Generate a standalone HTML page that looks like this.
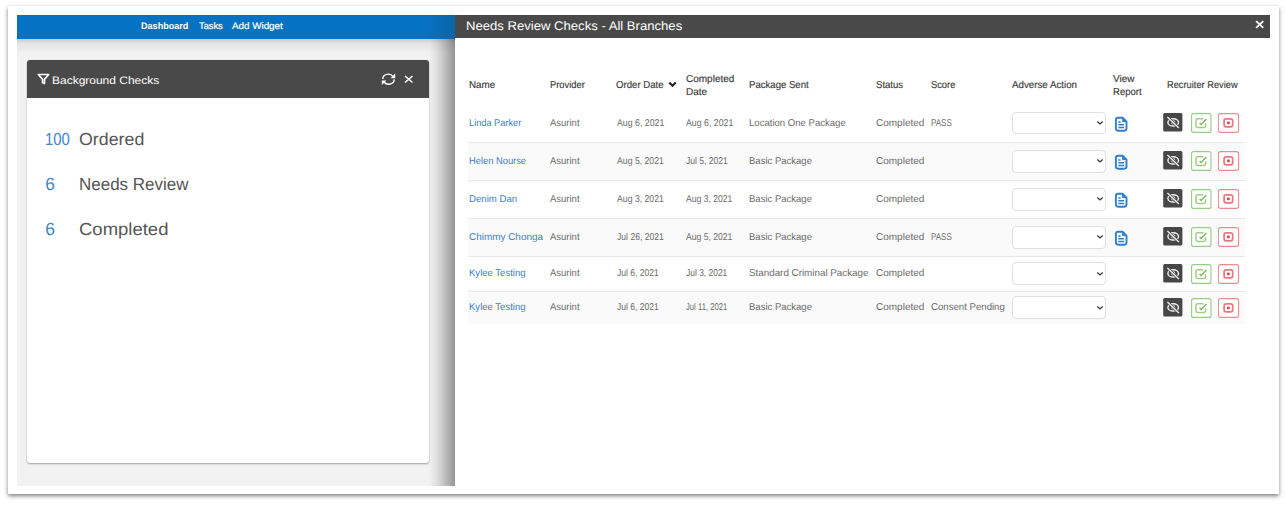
<!DOCTYPE html>
<html><head><meta charset="utf-8"><style>
*{margin:0;padding:0;box-sizing:border-box}
html,body{width:1287px;height:505px;overflow:hidden;background:#fff;font-family:"Liberation Sans",sans-serif;text-rendering:geometricPrecision}
.t{position:absolute;white-space:nowrap;transform-origin:0 50%}
.frame{position:absolute;left:8px;top:6.2px;width:1271px;height:487.6px;background:#fff;box-shadow:0 2px 4px rgba(0,0,0,.5)}
.nav{position:absolute;left:17px;top:15.4px;width:438px;height:23.3px;background:#0672c3}
.lp{position:absolute;left:17px;top:39px;width:438px;height:447px;background:#f2f2f2}
.lpshadow{position:absolute;left:17px;top:38.7px;width:438px;height:15px;background:linear-gradient(#cdcdcd,#e4e4e4 30%,#f2f2f2)}
.navgrad{position:absolute;left:425px;top:15.4px;width:30px;height:23.3px;background:linear-gradient(to right,rgba(0,0,0,0),rgba(40,40,40,.18))}
.lpgrad{position:absolute;left:429px;top:39px;width:26px;height:447px;background:linear-gradient(to right,rgba(0,0,0,0) 0%,rgba(0,0,0,.08) 30%,rgba(0,0,0,.38) 100%)}
.card{position:absolute;left:26.5px;top:60px;width:402.3px;height:403.3px;background:#fff;border-radius:3px;box-shadow:0 1px 2px rgba(0,0,0,.35)}
.chead{position:absolute;left:26.5px;top:59.8px;width:402.3px;height:38px;background:#494949;border-radius:3px 3px 0 0}
.rhead{position:absolute;left:455px;top:15.3px;width:815px;height:23.2px;background:#494949}
.row{position:absolute;left:468px;width:777px}
.sel{position:absolute;left:1012px;width:94.3px;height:22.8px;border:1.3px solid #e0e0e0;border-radius:4px;background:#fff}
.doc{position:absolute}
.btn{position:absolute;width:20px;height:19px;border-radius:2px}
.btn svg{display:block}
.dark{background:#474747}
.green{border:1px solid #8fcd7f;background:#fff}
.red{border:1px solid #ea6f77;background:#fff}
</style></head><body>
<div class="frame"></div>
<div class="lp"></div>
<div class="lpshadow"></div>
<div class="nav"></div><div class="navgrad"></div>
<div class="card"></div>
<div class="chead"></div>
<div class="lpgrad"></div>
<div class="rhead"></div>
<svg style="position:absolute;left:36.5px;top:72.5px" width="13" height="12" viewBox="0 0 13 12"><path d="M1.3 1.5 H11.7 L7.5 6.2 V10.6 L5.5 9.4 V6.2 Z" fill="none" stroke="#fff" stroke-width="1.7" stroke-linejoin="round"/></svg>
<svg style="position:absolute;left:381px;top:73px" width="15" height="13" viewBox="0 0 15 13"><path d="M1.9 6 A5.4 4.6 0 0 1 11.9 3.4" fill="none" stroke="#fff" stroke-width="1.4"/><path d="M14.2 0.6 V5.2 H9.6 Z" fill="#fff"/><path d="M13.1 6.4 A5.4 4.6 0 0 1 3.1 9" fill="none" stroke="#fff" stroke-width="1.4"/><path d="M0.8 12 V7.4 H5.4 Z" fill="#fff"/></svg>
<svg style="position:absolute;left:404px;top:75px" width="9.5" height="8.5" viewBox="0 0 9.5 8.5"><path d="M1 1 L8.5 7.5 M8.5 1 L1 7.5" stroke="#fff" stroke-width="1.5"/></svg>
<svg style="position:absolute;left:1254.5px;top:19.6px" width="9.5" height="9" viewBox="0 0 9.5 9"><path d="M1.1 1.1 L8.3 7.9 M8.3 1.1 L1.1 7.9" stroke="#fff" stroke-width="1.8"/></svg>
<svg style="position:absolute;left:668.3px;top:81px" width="9" height="7" viewBox="0 0 9 7"><path d="M1.3 1.5 L4.5 4.7 L7.7 1.5" stroke="#2a2a2a" stroke-width="2.3" fill="none"/></svg>
<div class="row" style="top:104px;height:38.19999999999999px;background:#fff;"></div><div class="sel" style="top:111.7px"></div><svg style="position:absolute;left:1095.5px;top:119.9px" width="8" height="6" viewBox="0 0 8 6"><path d="M1.3 1.4 L4 3.9 L6.7 1.4" stroke="#3a3a3a" stroke-width="1.35" fill="none"/></svg><svg class="doc" style="left:1114px;top:115.7px" width="14" height="16" viewBox="0 0 14 16"><path d="M4 1.7 H8.6 L12.5 5.6 V12.6 Q12.5 14.7 10.4 14.7 H4 Q1.9 14.7 1.9 12.6 V3.8 Q1.9 1.7 4 1.7 Z" fill="none" stroke="#2f7fd0" stroke-width="1.9" stroke-linejoin="round"/><path d="M8.6 1.7 V5.6 H12.5 Z" fill="#2f7fd0" stroke="#2f7fd0" stroke-width="1"/><path d="M4.3 5.9 H6.6 M4.3 8.8 H10 M4.3 11.6 H10" stroke="#2f7fd0" stroke-width="1.5"/></svg><svg style="position:absolute;left:1163px;top:112.8px" width="20" height="19" viewBox="0 0 20 19"><rect x="0.2" y="0" width="19.2" height="18.6" rx="1.5" fill="#474747"/><ellipse cx="10.2" cy="9.4" rx="5.3" ry="3.6" fill="none" stroke="#f2f2f2" stroke-width="1.4"/><circle cx="10.2" cy="9.4" r="1.6" fill="none" stroke="#f2f2f2" stroke-width="1.1"/><path d="M4.6 4.2 L15.8 14.8" stroke="#474747" stroke-width="2.6"/><path d="M4.4 4 L15.9 15" stroke="#f2f2f2" stroke-width="1.3"/></svg>
<svg style="position:absolute;left:1190.5px;top:112.9px" width="21" height="20" viewBox="0 0 21 20"><rect x="0.6" y="0.6" width="19.4" height="18.8" rx="2" fill="#fff" stroke="#93cf83" stroke-width="1.1"/><path d="M12.3 5.8 H6.6 Q5 5.8 5 7.4 V12.8 Q5 14.4 6.6 14.4 H13 Q14.6 14.4 14.6 12.8 V10.2" fill="none" stroke="#a2cc84" stroke-width="1.5"/><path d="M8.6 10 L10.1 11.5 L15.4 6" fill="none" stroke="#7cb865" stroke-width="1.5"/></svg>
<svg style="position:absolute;left:1217.5px;top:112.9px" width="22" height="20" viewBox="0 0 22 20"><rect x="0.4" y="0.6" width="20.2" height="18.8" rx="2.2" fill="#fff" stroke="#ee8a90" stroke-width="1.1"/><rect x="6.1" y="5.8" width="8.6" height="8" rx="2" fill="none" stroke="#e97880" stroke-width="1.7"/><rect x="9.1" y="8.6" width="2.6" height="2.6" fill="#e0404a"/></svg><div class="row" style="top:142.2px;height:38.10000000000002px;background:#fafafa;border-top:1px solid #e9e9e9;"></div><div class="sel" style="top:149.8px"></div><svg style="position:absolute;left:1095.5px;top:158.1px" width="8" height="6" viewBox="0 0 8 6"><path d="M1.3 1.4 L4 3.9 L6.7 1.4" stroke="#3a3a3a" stroke-width="1.35" fill="none"/></svg><svg class="doc" style="left:1114px;top:153.8px" width="14" height="16" viewBox="0 0 14 16"><path d="M4 1.7 H8.6 L12.5 5.6 V12.6 Q12.5 14.7 10.4 14.7 H4 Q1.9 14.7 1.9 12.6 V3.8 Q1.9 1.7 4 1.7 Z" fill="none" stroke="#2f7fd0" stroke-width="1.9" stroke-linejoin="round"/><path d="M8.6 1.7 V5.6 H12.5 Z" fill="#2f7fd0" stroke="#2f7fd0" stroke-width="1"/><path d="M4.3 5.9 H6.6 M4.3 8.8 H10 M4.3 11.6 H10" stroke="#2f7fd0" stroke-width="1.5"/></svg><svg style="position:absolute;left:1163px;top:150.9px" width="20" height="19" viewBox="0 0 20 19"><rect x="0.2" y="0" width="19.2" height="18.6" rx="1.5" fill="#474747"/><ellipse cx="10.2" cy="9.4" rx="5.3" ry="3.6" fill="none" stroke="#f2f2f2" stroke-width="1.4"/><circle cx="10.2" cy="9.4" r="1.6" fill="none" stroke="#f2f2f2" stroke-width="1.1"/><path d="M4.6 4.2 L15.8 14.8" stroke="#474747" stroke-width="2.6"/><path d="M4.4 4 L15.9 15" stroke="#f2f2f2" stroke-width="1.3"/></svg>
<svg style="position:absolute;left:1190.5px;top:151.0px" width="21" height="20" viewBox="0 0 21 20"><rect x="0.6" y="0.6" width="19.4" height="18.8" rx="2" fill="#fff" stroke="#93cf83" stroke-width="1.1"/><path d="M12.3 5.8 H6.6 Q5 5.8 5 7.4 V12.8 Q5 14.4 6.6 14.4 H13 Q14.6 14.4 14.6 12.8 V10.2" fill="none" stroke="#a2cc84" stroke-width="1.5"/><path d="M8.6 10 L10.1 11.5 L15.4 6" fill="none" stroke="#7cb865" stroke-width="1.5"/></svg>
<svg style="position:absolute;left:1217.5px;top:151.0px" width="22" height="20" viewBox="0 0 22 20"><rect x="0.4" y="0.6" width="20.2" height="18.8" rx="2.2" fill="#fff" stroke="#ee8a90" stroke-width="1.1"/><rect x="6.1" y="5.8" width="8.6" height="8" rx="2" fill="none" stroke="#e97880" stroke-width="1.7"/><rect x="9.1" y="8.6" width="2.6" height="2.6" fill="#e0404a"/></svg><div class="row" style="top:180.3px;height:37.69999999999999px;background:#fff;border-top:1px solid #e9e9e9;"></div><div class="sel" style="top:187.8px"></div><svg style="position:absolute;left:1095.5px;top:196.0px" width="8" height="6" viewBox="0 0 8 6"><path d="M1.3 1.4 L4 3.9 L6.7 1.4" stroke="#3a3a3a" stroke-width="1.35" fill="none"/></svg><svg class="doc" style="left:1114px;top:191.8px" width="14" height="16" viewBox="0 0 14 16"><path d="M4 1.7 H8.6 L12.5 5.6 V12.6 Q12.5 14.7 10.4 14.7 H4 Q1.9 14.7 1.9 12.6 V3.8 Q1.9 1.7 4 1.7 Z" fill="none" stroke="#2f7fd0" stroke-width="1.9" stroke-linejoin="round"/><path d="M8.6 1.7 V5.6 H12.5 Z" fill="#2f7fd0" stroke="#2f7fd0" stroke-width="1"/><path d="M4.3 5.9 H6.6 M4.3 8.8 H10 M4.3 11.6 H10" stroke="#2f7fd0" stroke-width="1.5"/></svg><svg style="position:absolute;left:1163px;top:188.8px" width="20" height="19" viewBox="0 0 20 19"><rect x="0.2" y="0" width="19.2" height="18.6" rx="1.5" fill="#474747"/><ellipse cx="10.2" cy="9.4" rx="5.3" ry="3.6" fill="none" stroke="#f2f2f2" stroke-width="1.4"/><circle cx="10.2" cy="9.4" r="1.6" fill="none" stroke="#f2f2f2" stroke-width="1.1"/><path d="M4.6 4.2 L15.8 14.8" stroke="#474747" stroke-width="2.6"/><path d="M4.4 4 L15.9 15" stroke="#f2f2f2" stroke-width="1.3"/></svg>
<svg style="position:absolute;left:1190.5px;top:188.9px" width="21" height="20" viewBox="0 0 21 20"><rect x="0.6" y="0.6" width="19.4" height="18.8" rx="2" fill="#fff" stroke="#93cf83" stroke-width="1.1"/><path d="M12.3 5.8 H6.6 Q5 5.8 5 7.4 V12.8 Q5 14.4 6.6 14.4 H13 Q14.6 14.4 14.6 12.8 V10.2" fill="none" stroke="#a2cc84" stroke-width="1.5"/><path d="M8.6 10 L10.1 11.5 L15.4 6" fill="none" stroke="#7cb865" stroke-width="1.5"/></svg>
<svg style="position:absolute;left:1217.5px;top:188.9px" width="22" height="20" viewBox="0 0 22 20"><rect x="0.4" y="0.6" width="20.2" height="18.8" rx="2.2" fill="#fff" stroke="#ee8a90" stroke-width="1.1"/><rect x="6.1" y="5.8" width="8.6" height="8" rx="2" fill="none" stroke="#e97880" stroke-width="1.7"/><rect x="9.1" y="8.6" width="2.6" height="2.6" fill="#e0404a"/></svg><div class="row" style="top:218px;height:38.39999999999998px;background:#fafafa;border-top:1px solid #e9e9e9;"></div><div class="sel" style="top:225.8px"></div><svg style="position:absolute;left:1095.5px;top:234.0px" width="8" height="6" viewBox="0 0 8 6"><path d="M1.3 1.4 L4 3.9 L6.7 1.4" stroke="#3a3a3a" stroke-width="1.35" fill="none"/></svg><svg class="doc" style="left:1114px;top:229.8px" width="14" height="16" viewBox="0 0 14 16"><path d="M4 1.7 H8.6 L12.5 5.6 V12.6 Q12.5 14.7 10.4 14.7 H4 Q1.9 14.7 1.9 12.6 V3.8 Q1.9 1.7 4 1.7 Z" fill="none" stroke="#2f7fd0" stroke-width="1.9" stroke-linejoin="round"/><path d="M8.6 1.7 V5.6 H12.5 Z" fill="#2f7fd0" stroke="#2f7fd0" stroke-width="1"/><path d="M4.3 5.9 H6.6 M4.3 8.8 H10 M4.3 11.6 H10" stroke="#2f7fd0" stroke-width="1.5"/></svg><svg style="position:absolute;left:1163px;top:226.9px" width="20" height="19" viewBox="0 0 20 19"><rect x="0.2" y="0" width="19.2" height="18.6" rx="1.5" fill="#474747"/><ellipse cx="10.2" cy="9.4" rx="5.3" ry="3.6" fill="none" stroke="#f2f2f2" stroke-width="1.4"/><circle cx="10.2" cy="9.4" r="1.6" fill="none" stroke="#f2f2f2" stroke-width="1.1"/><path d="M4.6 4.2 L15.8 14.8" stroke="#474747" stroke-width="2.6"/><path d="M4.4 4 L15.9 15" stroke="#f2f2f2" stroke-width="1.3"/></svg>
<svg style="position:absolute;left:1190.5px;top:227.0px" width="21" height="20" viewBox="0 0 21 20"><rect x="0.6" y="0.6" width="19.4" height="18.8" rx="2" fill="#fff" stroke="#93cf83" stroke-width="1.1"/><path d="M12.3 5.8 H6.6 Q5 5.8 5 7.4 V12.8 Q5 14.4 6.6 14.4 H13 Q14.6 14.4 14.6 12.8 V10.2" fill="none" stroke="#a2cc84" stroke-width="1.5"/><path d="M8.6 10 L10.1 11.5 L15.4 6" fill="none" stroke="#7cb865" stroke-width="1.5"/></svg>
<svg style="position:absolute;left:1217.5px;top:227.0px" width="22" height="20" viewBox="0 0 22 20"><rect x="0.4" y="0.6" width="20.2" height="18.8" rx="2.2" fill="#fff" stroke="#ee8a90" stroke-width="1.1"/><rect x="6.1" y="5.8" width="8.6" height="8" rx="2" fill="none" stroke="#e97880" stroke-width="1.7"/><rect x="9.1" y="8.6" width="2.6" height="2.6" fill="#e0404a"/></svg><div class="row" style="top:256.4px;height:34.80000000000001px;background:#fff;border-top:1px solid #e9e9e9;"></div><div class="sel" style="top:262.4px"></div><svg style="position:absolute;left:1095.5px;top:270.6px" width="8" height="6" viewBox="0 0 8 6"><path d="M1.3 1.4 L4 3.9 L6.7 1.4" stroke="#3a3a3a" stroke-width="1.35" fill="none"/></svg><svg style="position:absolute;left:1163px;top:263.5px" width="20" height="19" viewBox="0 0 20 19"><rect x="0.2" y="0" width="19.2" height="18.6" rx="1.5" fill="#474747"/><ellipse cx="10.2" cy="9.4" rx="5.3" ry="3.6" fill="none" stroke="#f2f2f2" stroke-width="1.4"/><circle cx="10.2" cy="9.4" r="1.6" fill="none" stroke="#f2f2f2" stroke-width="1.1"/><path d="M4.6 4.2 L15.8 14.8" stroke="#474747" stroke-width="2.6"/><path d="M4.4 4 L15.9 15" stroke="#f2f2f2" stroke-width="1.3"/></svg>
<svg style="position:absolute;left:1190.5px;top:263.6px" width="21" height="20" viewBox="0 0 21 20"><rect x="0.6" y="0.6" width="19.4" height="18.8" rx="2" fill="#fff" stroke="#93cf83" stroke-width="1.1"/><path d="M12.3 5.8 H6.6 Q5 5.8 5 7.4 V12.8 Q5 14.4 6.6 14.4 H13 Q14.6 14.4 14.6 12.8 V10.2" fill="none" stroke="#a2cc84" stroke-width="1.5"/><path d="M8.6 10 L10.1 11.5 L15.4 6" fill="none" stroke="#7cb865" stroke-width="1.5"/></svg>
<svg style="position:absolute;left:1217.5px;top:263.6px" width="22" height="20" viewBox="0 0 22 20"><rect x="0.4" y="0.6" width="20.2" height="18.8" rx="2.2" fill="#fff" stroke="#ee8a90" stroke-width="1.1"/><rect x="6.1" y="5.8" width="8.6" height="8" rx="2" fill="none" stroke="#e97880" stroke-width="1.7"/><rect x="9.1" y="8.6" width="2.6" height="2.6" fill="#e0404a"/></svg><div class="row" style="top:291.2px;height:33.19999999999999px;background:#fafafa;border-top:1px solid #e9e9e9;"></div><div class="sel" style="top:296.4px"></div><svg style="position:absolute;left:1095.5px;top:304.6px" width="8" height="6" viewBox="0 0 8 6"><path d="M1.3 1.4 L4 3.9 L6.7 1.4" stroke="#3a3a3a" stroke-width="1.35" fill="none"/></svg><svg style="position:absolute;left:1163px;top:297.5px" width="20" height="19" viewBox="0 0 20 19"><rect x="0.2" y="0" width="19.2" height="18.6" rx="1.5" fill="#474747"/><ellipse cx="10.2" cy="9.4" rx="5.3" ry="3.6" fill="none" stroke="#f2f2f2" stroke-width="1.4"/><circle cx="10.2" cy="9.4" r="1.6" fill="none" stroke="#f2f2f2" stroke-width="1.1"/><path d="M4.6 4.2 L15.8 14.8" stroke="#474747" stroke-width="2.6"/><path d="M4.4 4 L15.9 15" stroke="#f2f2f2" stroke-width="1.3"/></svg>
<svg style="position:absolute;left:1190.5px;top:297.6px" width="21" height="20" viewBox="0 0 21 20"><rect x="0.6" y="0.6" width="19.4" height="18.8" rx="2" fill="#fff" stroke="#93cf83" stroke-width="1.1"/><path d="M12.3 5.8 H6.6 Q5 5.8 5 7.4 V12.8 Q5 14.4 6.6 14.4 H13 Q14.6 14.4 14.6 12.8 V10.2" fill="none" stroke="#a2cc84" stroke-width="1.5"/><path d="M8.6 10 L10.1 11.5 L15.4 6" fill="none" stroke="#7cb865" stroke-width="1.5"/></svg>
<svg style="position:absolute;left:1217.5px;top:297.6px" width="22" height="20" viewBox="0 0 22 20"><rect x="0.4" y="0.6" width="20.2" height="18.8" rx="2.2" fill="#fff" stroke="#ee8a90" stroke-width="1.1"/><rect x="6.1" y="5.8" width="8.6" height="8" rx="2" fill="none" stroke="#e97880" stroke-width="1.7"/><rect x="9.1" y="8.6" width="2.6" height="2.6" fill="#e0404a"/></svg>
<div class="t" style="left:140.60px;top:20.54px;font-size:9.4px;line-height:9.4px;color:#fff;font-weight:bold;transform:scaleX(0.9675);">Dashboard</div><div class="t" style="left:198.70px;top:20.54px;font-size:9.4px;line-height:9.4px;color:#fff;transform:scaleX(0.9906);-webkit-text-stroke:0.2px #fff;">Tasks</div><div class="t" style="left:231.70px;top:20.54px;font-size:9.4px;line-height:9.4px;color:#fff;transform:scaleX(1.0476);-webkit-text-stroke:0.2px #fff;">Add Widget</div><div class="t" style="left:52.00px;top:75.77px;font-size:10.9px;line-height:10.9px;color:#fff;transform:scaleX(1.1000);">Background Checks</div><div class="t" style="left:45.30px;top:130.57px;font-size:17.4px;line-height:17.4px;color:#3d85cc;transform:scaleX(0.8579);">100</div><div class="t" style="left:78.50px;top:130.57px;font-size:17.4px;line-height:17.4px;color:#555;transform:scaleX(1.0231);">Ordered</div><div class="t" style="left:45.30px;top:176.37px;font-size:17.4px;line-height:17.4px;color:#3d85cc;">6</div><div class="t" style="left:78.50px;top:176.37px;font-size:17.4px;line-height:17.4px;color:#555;transform:scaleX(0.9757);">Needs Review</div><div class="t" style="left:45.30px;top:221.37px;font-size:17.4px;line-height:17.4px;color:#3d85cc;">6</div><div class="t" style="left:78.50px;top:221.37px;font-size:17.4px;line-height:17.4px;color:#555;transform:scaleX(1.0636);">Completed</div><div class="t" style="left:466.20px;top:20.22px;font-size:12.5px;line-height:12.5px;color:#fff;transform:scaleX(1.0478);">Needs Review Checks - All Branches</div><div class="t" style="left:468.60px;top:80.83px;font-size:10px;line-height:10px;color:#3a3a3a;transform:scaleX(0.9783);-webkit-text-stroke:0.15px #3a3a3a;">Name</div><div class="t" style="left:549.90px;top:80.83px;font-size:10px;line-height:10px;color:#3a3a3a;transform:scaleX(0.9372);-webkit-text-stroke:0.15px #3a3a3a;">Provider</div><div class="t" style="left:616.40px;top:80.83px;font-size:10px;line-height:10px;color:#3a3a3a;transform:scaleX(0.9624);-webkit-text-stroke:0.15px #3a3a3a;">Order Date</div><div class="t" style="left:686.00px;top:74.73px;font-size:10px;line-height:10px;color:#3a3a3a;-webkit-text-stroke:0.15px #3a3a3a;">Completed</div><div class="t" style="left:686.00px;top:87.94px;font-size:10px;line-height:10px;color:#3a3a3a;-webkit-text-stroke:0.15px #3a3a3a;">Date</div><div class="t" style="left:749.00px;top:80.83px;font-size:10px;line-height:10px;color:#3a3a3a;transform:scaleX(0.9587);-webkit-text-stroke:0.15px #3a3a3a;">Package Sent</div><div class="t" style="left:875.50px;top:80.83px;font-size:10px;line-height:10px;color:#3a3a3a;transform:scaleX(0.9559);-webkit-text-stroke:0.15px #3a3a3a;">Status</div><div class="t" style="left:931.00px;top:80.83px;font-size:10px;line-height:10px;color:#3a3a3a;transform:scaleX(0.9303);-webkit-text-stroke:0.15px #3a3a3a;">Score</div><div class="t" style="left:1012.00px;top:80.83px;font-size:10px;line-height:10px;color:#3a3a3a;transform:scaleX(0.9745);-webkit-text-stroke:0.15px #3a3a3a;">Adverse Action</div><div class="t" style="left:1113.00px;top:74.73px;font-size:10px;line-height:10px;color:#3a3a3a;-webkit-text-stroke:0.15px #3a3a3a;">View</div><div class="t" style="left:1113.00px;top:87.94px;font-size:10px;line-height:10px;color:#3a3a3a;transform:scaleX(0.9530);-webkit-text-stroke:0.15px #3a3a3a;">Report</div><div class="t" style="left:1167.40px;top:80.83px;font-size:10px;line-height:10px;color:#3a3a3a;transform:scaleX(0.9283);-webkit-text-stroke:0.15px #3a3a3a;">Recruiter Review</div><div class="t" style="left:468.50px;top:118.62px;font-size:9.9px;line-height:9.9px;color:#4080c8;transform:scaleX(0.9335);">Linda Parker</div><div class="t" style="left:550.00px;top:118.62px;font-size:9.9px;line-height:9.9px;color:#6b6b6b;transform:scaleX(0.9608);">Asurint</div><div class="t" style="left:616.50px;top:118.62px;font-size:9.9px;line-height:9.9px;color:#6b6b6b;transform:scaleX(0.8876);">Aug 6, 2021</div><div class="t" style="left:686.00px;top:118.62px;font-size:9.9px;line-height:9.9px;color:#6b6b6b;transform:scaleX(0.8876);">Aug 6, 2021</div><div class="t" style="left:749.10px;top:118.62px;font-size:9.9px;line-height:9.9px;color:#6b6b6b;transform:scaleX(0.9684);">Location One Package</div><div class="t" style="left:875.50px;top:118.62px;font-size:9.9px;line-height:9.9px;color:#6b6b6b;transform:scaleX(1.0130);">Completed</div><div class="t" style="left:931.00px;top:118.62px;font-size:9.9px;line-height:9.9px;color:#6b6b6b;transform:scaleX(0.8099);">PASS</div><div class="t" style="left:468.50px;top:156.62px;font-size:9.9px;line-height:9.9px;color:#4080c8;transform:scaleX(0.9450);">Helen Nourse</div><div class="t" style="left:550.00px;top:156.62px;font-size:9.9px;line-height:9.9px;color:#6b6b6b;transform:scaleX(0.9608);">Asurint</div><div class="t" style="left:616.50px;top:156.62px;font-size:9.9px;line-height:9.9px;color:#6b6b6b;transform:scaleX(0.8801);">Aug 5, 2021</div><div class="t" style="left:686.00px;top:156.62px;font-size:9.9px;line-height:9.9px;color:#6b6b6b;transform:scaleX(0.8650);">Jul 5, 2021</div><div class="t" style="left:749.10px;top:156.62px;font-size:9.9px;line-height:9.9px;color:#6b6b6b;transform:scaleX(0.9635);">Basic Package</div><div class="t" style="left:875.50px;top:156.62px;font-size:9.9px;line-height:9.9px;color:#6b6b6b;transform:scaleX(1.0130);">Completed</div><div class="t" style="left:468.50px;top:194.72px;font-size:9.9px;line-height:9.9px;color:#4080c8;transform:scaleX(0.9733);">Denim Dan</div><div class="t" style="left:550.00px;top:194.72px;font-size:9.9px;line-height:9.9px;color:#6b6b6b;transform:scaleX(0.9608);">Asurint</div><div class="t" style="left:616.50px;top:194.72px;font-size:9.9px;line-height:9.9px;color:#6b6b6b;transform:scaleX(0.8801);">Aug 3, 2021</div><div class="t" style="left:686.00px;top:194.72px;font-size:9.9px;line-height:9.9px;color:#6b6b6b;transform:scaleX(0.8689);">Aug 3, 2021</div><div class="t" style="left:749.10px;top:194.72px;font-size:9.9px;line-height:9.9px;color:#6b6b6b;transform:scaleX(0.9635);">Basic Package</div><div class="t" style="left:875.50px;top:194.72px;font-size:9.9px;line-height:9.9px;color:#6b6b6b;transform:scaleX(1.0130);">Completed</div><div class="t" style="left:468.50px;top:232.82px;font-size:9.9px;line-height:9.9px;color:#4080c8;transform:scaleX(1.0063);">Chimmy Chonga</div><div class="t" style="left:550.00px;top:232.82px;font-size:9.9px;line-height:9.9px;color:#6b6b6b;transform:scaleX(0.9608);">Asurint</div><div class="t" style="left:616.50px;top:232.82px;font-size:9.9px;line-height:9.9px;color:#6b6b6b;transform:scaleX(0.8713);">Jul 26, 2021</div><div class="t" style="left:686.00px;top:232.82px;font-size:9.9px;line-height:9.9px;color:#6b6b6b;transform:scaleX(0.8708);">Aug 5, 2021</div><div class="t" style="left:749.10px;top:232.82px;font-size:9.9px;line-height:9.9px;color:#6b6b6b;transform:scaleX(0.9635);">Basic Package</div><div class="t" style="left:875.50px;top:232.82px;font-size:9.9px;line-height:9.9px;color:#6b6b6b;transform:scaleX(1.0130);">Completed</div><div class="t" style="left:931.00px;top:232.82px;font-size:9.9px;line-height:9.9px;color:#6b6b6b;transform:scaleX(0.8099);">PASS</div><div class="t" style="left:468.50px;top:269.22px;font-size:9.9px;line-height:9.9px;color:#4080c8;transform:scaleX(0.9658);">Kylee Testing</div><div class="t" style="left:550.00px;top:269.22px;font-size:9.9px;line-height:9.9px;color:#6b6b6b;transform:scaleX(0.9608);">Asurint</div><div class="t" style="left:616.50px;top:269.22px;font-size:9.9px;line-height:9.9px;color:#6b6b6b;transform:scaleX(0.8650);">Jul 6, 2021</div><div class="t" style="left:686.00px;top:269.22px;font-size:9.9px;line-height:9.9px;color:#6b6b6b;transform:scaleX(0.8547);">Jul 3, 2021</div><div class="t" style="left:749.10px;top:269.22px;font-size:9.9px;line-height:9.9px;color:#6b6b6b;transform:scaleX(0.9941);">Standard Criminal Package</div><div class="t" style="left:875.50px;top:269.22px;font-size:9.9px;line-height:9.9px;color:#6b6b6b;transform:scaleX(1.0130);">Completed</div><div class="t" style="left:468.50px;top:303.22px;font-size:9.9px;line-height:9.9px;color:#4080c8;transform:scaleX(0.9658);">Kylee Testing</div><div class="t" style="left:550.00px;top:303.22px;font-size:9.9px;line-height:9.9px;color:#6b6b6b;transform:scaleX(0.9608);">Asurint</div><div class="t" style="left:616.50px;top:303.22px;font-size:9.9px;line-height:9.9px;color:#6b6b6b;transform:scaleX(0.8650);">Jul 6, 2021</div><div class="t" style="left:686.00px;top:303.22px;font-size:9.9px;line-height:9.9px;color:#6b6b6b;transform:scaleX(0.7780);">Jul 11, 2021</div><div class="t" style="left:749.10px;top:303.22px;font-size:9.9px;line-height:9.9px;color:#6b6b6b;transform:scaleX(0.9635);">Basic Package</div><div class="t" style="left:875.50px;top:303.22px;font-size:9.9px;line-height:9.9px;color:#6b6b6b;transform:scaleX(1.0130);">Completed</div><div class="t" style="left:931.00px;top:303.22px;font-size:9.9px;line-height:9.9px;color:#6b6b6b;transform:scaleX(0.9743);">Consent Pending</div>
</body></html>
